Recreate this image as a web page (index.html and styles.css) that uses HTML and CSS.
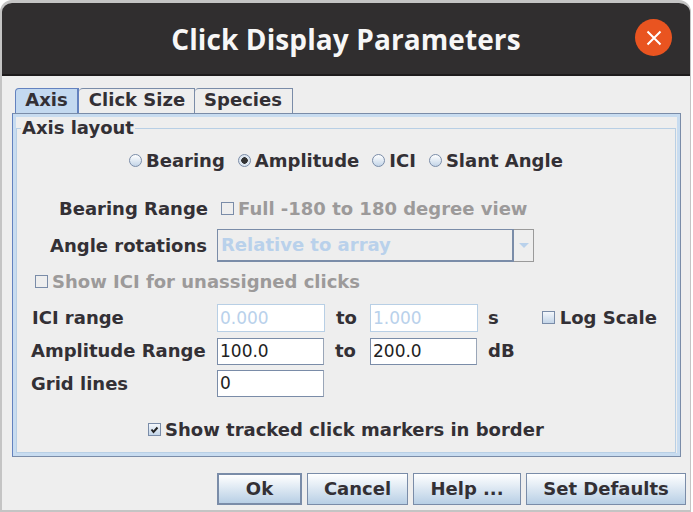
FILE: index.html
```html
<!DOCTYPE html>
<html lang="en">
  <head>
    <meta charset="UTF-8" />
    <title>Click Display Parameters</title>
    <link rel="stylesheet" href="styles.css">
  </head>
  <body>
    <div class="window">
      <div class="titlebar">
        <h1>Click Display Parameters</h1>
        <div class="close">
          <svg width="16" height="16" viewBox="0 0 16 16"><path d="M1.5 1.5L14.5 14.5M14.5 1.5L1.5 14.5" stroke="#fff" stroke-width="2" fill="none"/></svg>
        </div>
      </div>
      <div class="content">
        <ul class="tabs">
          <li class="tab tab-axis active">Axis</li>
          <li class="tab tab-size">Click Size</li>
          <li class="tab tab-species">Species</li>
        </ul>
        <div class="tabpanel">
          <fieldset class="group">
            <legend>Axis layout</legend>
            <div class="radios">
              <span class="option opt-bearing"><i class="radio"></i>Bearing</span>
              <span class="option opt-amp"><i class="radio checked"></i>Amplitude</span>
              <span class="option opt-ici"><i class="radio"></i>ICI</span>
              <span class="option opt-slant"><i class="radio"></i>Slant Angle</span>
            </div>
            <div class="row row-bearing">
              <label class="label">Bearing Range</label>
              <span class="option disabled"><i class="check off"></i>Full -180 to 180 degree view</span>
            </div>
            <div class="row row-angle">
              <label class="label">Angle rotations</label>
              <div class="combo">
                <div class="combo-value">Relative to array</div>
                <div class="combo-arrow"><i></i></div>
              </div>
            </div>
            <div class="row row-showici">
              <span class="option disabled"><i class="check off"></i>Show ICI for unassigned clicks</span>
            </div>
            <div class="row row-ici">
              <label class="label-left">ICI range</label>
              <div class="field field-off">0.000</div>
              <span class="to">to</span>
              <div class="field field-off">1.000</div>
              <span class="unit">s</span>
              <span class="option log"><i class="check"></i>Log Scale</span>
            </div>
            <div class="row row-amp">
              <label class="label-left">Amplitude Range</label>
              <div class="field">100.0</div>
              <span class="to">to</span>
              <div class="field">200.0</div>
              <span class="unit">dB</span>
            </div>
            <div class="row row-grid">
              <label class="label-left">Grid lines</label>
              <div class="field">0</div>
            </div>
            <div class="row row-tracked">
              <span class="option">
                <i class="check">
                  <svg width="9" height="9" viewBox="0 0 9 9"><path d="M1.5 4.5L3.5 7L7.5 2.5" stroke="#222" stroke-width="2" fill="none"/></svg>
                </i>Show tracked click markers in border
              </span>
            </div>
          </fieldset>
        </div>
        <div class="buttons">
          <button class="btn btn-ok">Ok</button>
          <button class="btn btn-cancel">Cancel</button>
          <button class="btn btn-help">Help ...</button>
          <button class="btn btn-defaults">Set Defaults</button>
        </div>
      </div>
    </div>
  </body>
</html>
```

FILE: styles.css
```css
html,
body {
  margin: 0;
  padding: 0;
}

body {
  width: 693px;
  height: 512px;
  overflow: hidden;
  background-color: #fff;
  font-family: "DejaVu Sans", sans-serif;
  font-weight: bold;
  font-size: 18px;
  color: #333035;
}

.window {
  box-sizing: border-box;
  width: 691px;
  height: 512px;
  background-color: #eeeeee;
  border: solid #c4c4c4;
  border-width: 3px 1px 2px 2px;
  border-radius: 12px 12px 0 0;
  overflow: hidden;
}

.titlebar {
  box-sizing: border-box;
  height: 73px;
  background-color: #302e2f;
  border-bottom: 2px solid #1d1b1c;
  display: flex;
  align-items: center;
  justify-content: center;
  position: relative;
}

h1 {
  margin: 0;
  color: #f7f7f7;
  font-family: "Open Sans", sans-serif;
  font-size: 28px;
  letter-spacing: 0.1px;
  font-weight: bold;
}

.close {
  position: absolute;
  left: 633px;
  top: 16px;
  width: 37px;
  height: 37px;
  border-radius: 50%;
  background-color: #e95420;
  display: flex;
  align-items: center;
  justify-content: center;
}

.content {
  padding: 12px 0 0 10px;
}

.tabs {
  list-style-type: none;
  margin: 0 0 0 3px;
  padding: 0;
  display: flex;
  height: 25px;
}

.tab {
  box-sizing: border-box;
  height: 25px;
  border: 1px solid #7a8ca8;
  border-bottom: none;
  border-left: none;
  border-top-left-radius: 4px;
  line-height: 21px;
  text-align: center;
}

.tab-axis {
  width: 64px;
  background-color: #c3d9f0;
  border: 1px solid #6382bf;
  border-bottom: none;
  border-right-width: 2px;
}

.tab-size {
  width: 116px;
  padding-left: 1px;
}

.tab-species {
  width: 98px;
  padding-right: 1px;
}

.tabpanel {
  box-sizing: border-box;
  width: 669px;
  height: 344px;
  border: 1px solid #7a8ca8;
  border-left-color: #6382bf;
  padding: 3px;
  box-shadow: inset 0 0 0 3px #c8dcf0;
}

.group {
  box-sizing: border-box;
  margin: 1px 0 0 0;
  padding: 0;
  width: 660px;
  height: 335px;
  border: 1px solid #b8cfe5;
}

legend {
  margin-left: 4px;
  padding: 0 1px;
  line-height: 20px;
}

.radios {
  display: flex;
  padding-top: 10px;
  height: 24px;
  align-items: center;
}

.option {
  display: flex;
  align-items: center;
  white-space: nowrap;
}

.opt-bearing { margin-left: 112px; }
.opt-amp { margin-left: 13px; }
.opt-ici { margin-left: 13px; }
.opt-slant { margin-left: 13px; }

.radio {
  box-sizing: border-box;
  width: 13px;
  height: 13px;
  margin-right: 4px;
  border-radius: 50%;
  border: 1px solid #7a8ca8;
  background: linear-gradient(#ffffff, #c3d5e8);
  display: block;
}

.radio.checked {
  background: radial-gradient(circle, #333 0, #333 3px, #dde6f0 3.5px);
}

.check {
  box-sizing: border-box;
  width: 13px;
  height: 13px;
  margin-right: 4px;
  border: 1px solid #7a8ca8;
  background: linear-gradient(#f4f7fb, #c3d5e8);
  display: flex;
  align-items: center;
  justify-content: center;
}

.check.off {
  background: none;
}

.disabled {
  color: #9c9a9a;
}

.row {
  display: flex;
  align-items: center;
}

.label {
  box-sizing: border-box;
  width: 191px;
  text-align: right;
}

.label-left {
  box-sizing: border-box;
  width: 200px;
  padding-left: 14px;
}

.row-bearing {
  height: 24px;
  margin-top: 24px;
}

.row-bearing .option {
  margin-left: 13px;
}

.row-angle {
  height: 33px;
  margin-top: 9px;
}

.row-angle .label {
  padding-right: 1px;
}

.combo {
  display: flex;
  margin-left: 9px;
  width: 317px;
  height: 33px;
  box-sizing: border-box;
}

.combo-value {
  box-sizing: border-box;
  flex: 1;
  border: solid #7a8ca8;
  border-width: 1px 2px 2px 1px;
  color: #b9d1eb;
  padding-left: 3px;
  line-height: 29px;
}

.combo-arrow {
  box-sizing: border-box;
  width: 20px;
  border: 1px solid #9a9a9a;
  border-left: none;
  display: flex;
  align-items: center;
  justify-content: center;
}

.combo-arrow i {
  width: 0;
  height: 0;
  border-left: 5px solid transparent;
  border-right: 5px solid transparent;
  border-top: 5px solid #b9d1eb;
}

.row-showici {
  height: 24px;
  margin-top: 7px;
  padding-left: 18px;
}

.row-ici {
  height: 28px;
  margin-top: 11px;
}

.row-ici .label-left {
  padding-left: 15px;
}

.row-ici .label-left,
.row-amp .label-left,
.to,
.unit,
.log {
  margin-bottom: 2px;
}

.row-amp {
  height: 27px;
  margin-top: 6px;
}

.row-grid {
  height: 27px;
  margin-top: 5px;
}

.field {
  box-sizing: border-box;
  width: 107px;
  height: 100%;
  background-color: #fff;
  border: 1px solid #7a8ca8;
  border-right-color: #9aa6b8;
  padding-left: 2px;
  line-height: 25px;
  font-weight: normal;
  font-size: 17px;
  color: #222;
}

.field-off {
  width: 108px;
  border-color: #b8cfe5;
  color: #b9d1eb;
  line-height: 27px;
}

.to {
  width: 45px;
  padding-left: 11px;
  box-sizing: border-box;
}

.row-amp .to {
  width: 46px;
}

.unit {
  margin-left: 10px;
}

.row-amp .unit {
  margin-left: 11px;
}

.log {
  margin-left: 43px;
}

.log .check {
  margin-right: 5px;
}

.row-tracked {
  height: 24px;
  margin-top: 20px;
  padding-left: 131px;
}

.buttons {
  display: flex;
  gap: 5px;
  margin: 16px 0 0 205px;
}

.btn {
  box-sizing: border-box;
  height: 32px;
  padding: 0 0 2px 0;
  border: 1px solid #7a8ca8;
  background: linear-gradient(#ffffff, #b8cfe5);
  font-family: inherit;
  font-size: 18px;
  font-weight: bold;
  color: #333035;
}

.btn-ok {
  width: 85px;
  border-width: 2px;
}

.btn-cancel {
  width: 101px;
}

.btn-help {
  width: 108px;
}

.btn-defaults {
  width: 160px;
}
```
